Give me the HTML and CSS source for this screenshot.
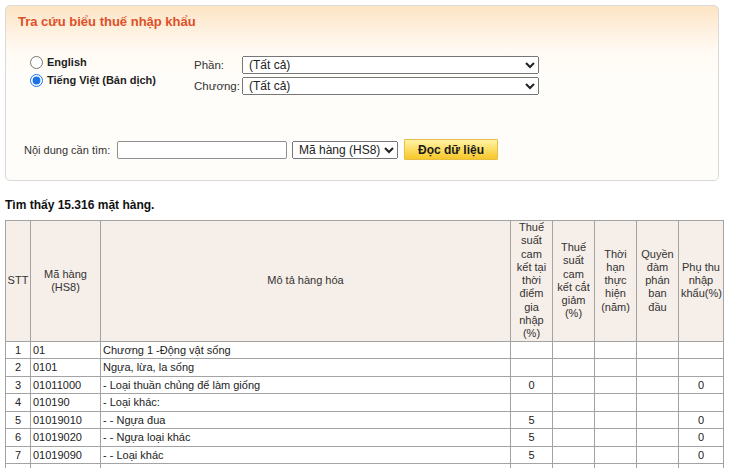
FILE: index.html
```html
<!DOCTYPE html>
<html lang="vi">
<head>
<meta charset="utf-8">
<title>Tra cứu biểu thuế nhập khẩu</title>
<link rel="stylesheet" href="styles.css">
</head>
<body>
<div class="panel">
  <div class="panel-title">Tra cứu biểu thuế nhập khẩu</div>
  <div class="options">
    <div class="lang">
      <label class="radio-row"><input type="radio" name="lang" class="radio"><span>English</span></label>
      <label class="radio-row"><input type="radio" name="lang" class="radio" checked><span>Tiếng Việt (Bản dịch)</span></label>
    </div>
    <div class="filters">
      <div class="filter-row"><span class="filter-label">Phần:</span><select class="sel-wide"><option>(Tất cả)</option></select></div>
      <div class="filter-row"><span class="filter-label">Chương:</span><select class="sel-wide"><option>(Tất cả)</option></select></div>
    </div>
  </div>
  <div class="search">
    <span class="search-label">Nội dung cần tìm:</span>
    <input type="text" class="search-input">
    <select class="sel-type"><option>Mã hàng (HS8)</option></select>
    <button class="btn">Đọc dữ liệu</button>
  </div>
</div>

<div class="found">Tìm thấy 15.316 mặt hàng.</div>

<table class="grid">
  <colgroup>
    <col class="c-stt"><col class="c-code"><col class="c-desc"><col class="c-n"><col class="c-n"><col class="c-n"><col class="c-n"><col class="c-last">
  </colgroup>
  <thead>
    <tr>
      <th class="th-stt">STT</th>
      <th>Mã hàng (HS8)</th>
      <th>Mô tả hàng hóa</th>
      <th>Thuế suất cam kết tại thời điểm gia nhập (%)</th>
      <th>Thuế suất cam kết cắt giảm (%)</th>
      <th>Thời hạn thực hiện (năm)</th>
      <th>Quyền đàm phán ban đầu</th>
      <th>Phụ thu nhập khẩu(%)</th>
    </tr>
  </thead>
  <tbody>
    <tr><td class="ctr">1</td><td>01</td><td>Chương 1 -Động vật sống</td><td class="ctr"></td><td></td><td></td><td></td><td class="ctr"></td></tr>
    <tr><td class="ctr">2</td><td>0101</td><td>Ngựa, lừa, la sống</td><td class="ctr"></td><td></td><td></td><td></td><td class="ctr"></td></tr>
    <tr><td class="ctr">3</td><td>01011000</td><td>- Loại thuần chủng để làm giống</td><td class="ctr">0</td><td></td><td></td><td></td><td class="ctr">0</td></tr>
    <tr><td class="ctr">4</td><td>010190</td><td>- Loại khác:</td><td class="ctr"></td><td></td><td></td><td></td><td class="ctr"></td></tr>
    <tr><td class="ctr">5</td><td>01019010</td><td>- - Ngựa đua</td><td class="ctr">5</td><td></td><td></td><td></td><td class="ctr">0</td></tr>
    <tr><td class="ctr">6</td><td>01019020</td><td>- - Ngựa loại khác</td><td class="ctr">5</td><td></td><td></td><td></td><td class="ctr">0</td></tr>
    <tr><td class="ctr">7</td><td>01019090</td><td>- - Loại khác</td><td class="ctr">5</td><td></td><td></td><td></td><td class="ctr">0</td></tr>
    <tr><td class="ctr"></td><td></td><td></td><td class="ctr"></td><td></td><td></td><td></td><td class="ctr"></td></tr>
  </tbody>
</table>
</body>
</html>
```
FILE: styles.css
```css
html, body {
  margin: 0;
  background: #ffffff;
}
body {
  padding: 5px 0 0 5px;
  font-family: "Liberation Sans", Arial, sans-serif;
  color: #222;
  overflow: hidden;
}

.panel {
  width: 714px;
  height: 176px;
  box-sizing: border-box;
  border: 1px solid #d9d9d9;
  border-radius: 5px;
  background: linear-gradient(to bottom, #fde4c4 0px, #fef1e0 25px, #fffaf3 45px, #fffdf9 70px, #fffdfa 100%);
}

.panel-title {
  height: 40px;
  box-sizing: border-box;
  padding: 8px 12px 0;
  font-size: 13px;
  line-height: 15px;
  font-weight: bold;
  color: #dd5028;
}

.options {
  display: flex;
  margin-top: 7px;
  padding-left: 24px;
}
.lang {
  width: 164px;
  display: flex;
  flex-direction: column;
}
.radio-row {
  display: flex;
  align-items: center;
  height: 18px;
  font-size: 11px;
  font-weight: bold;
  color: #1e1e1e;
}
.radio {
  width: 13px;
  height: 13px;
  margin: 0 4px 0 0;
  accent-color: #1a73e8;
}

.filters {
  margin-top: 3px;
  display: flex;
  flex-direction: column;
  gap: 3px;
}
.filter-row {
  display: flex;
  align-items: center;
  height: 18px;
}
.filter-label {
  width: 48px;
  font-size: 11.5px;
  color: #333;
}
.sel-wide {
  width: 297px;
  height: 18px;
  padding: 0 0 0 2px;
  font-family: "Liberation Sans", Arial, sans-serif;
  font-size: 12px;
  color: #222;
}

.search {
  display: flex;
  align-items: center;
  margin-top: 44px;
  padding-left: 18px;
}
.search-label {
  font-size: 11px;
  color: #333;
  width: 93px;
}
.search-input {
  width: 170px;
  height: 18px;
  box-sizing: border-box;
  margin: 0;
  border: 1px solid #8f8f8f;
  border-radius: 2px;
  background: #fff;
}
.sel-type {
  margin-left: 5px;
  width: 106px;
  height: 18px;
  padding: 0 0 0 2px;
  font-family: "Liberation Sans", Arial, sans-serif;
  font-size: 12px;
  color: #222;
}
.btn {
  margin-left: 6px;
  width: 94px;
  height: 21px;
  padding: 0;
  border: 1px solid #e6bd45;
  border-radius: 1px;
  background: linear-gradient(to bottom, #fff3a8 0%, #fde06a 45%, #f7c62a 100%);
  font-family: "Liberation Sans", Arial, sans-serif;
  font-size: 12px;
  font-weight: bold;
  color: #1a1a1a;
}

.found {
  margin-top: 17px;
  height: 14px;
  font-size: 12px;
  line-height: 14px;
  font-weight: bold;
  color: #111;
}

.grid {
  margin-top: 8px;
  width: 718px;
  table-layout: fixed;
  border-collapse: collapse;
  font-size: 11px;
  color: #222;
}
.c-stt { width: 25px; }
.c-code { width: 70px; }
.c-desc { width: 410px; }
.c-n { width: 42px; }
.c-last { width: 45px; }

.grid th,
.grid td {
  border: 1px solid #a3a3a3;
}
.grid th {
  background: #f6eee8;
  font-weight: normal;
  color: #333;
  line-height: 13.3px;
  padding: 0 2px;
  text-align: center;
  vertical-align: middle;
}
.grid th.th-stt {
  padding: 0;
}
.grid td {
  padding: 2px 2px;
  line-height: 12.5px;
  height: 12.5px;
  white-space: nowrap;
  overflow: hidden;
}
.grid td.ctr {
  text-align: center;
}
```
